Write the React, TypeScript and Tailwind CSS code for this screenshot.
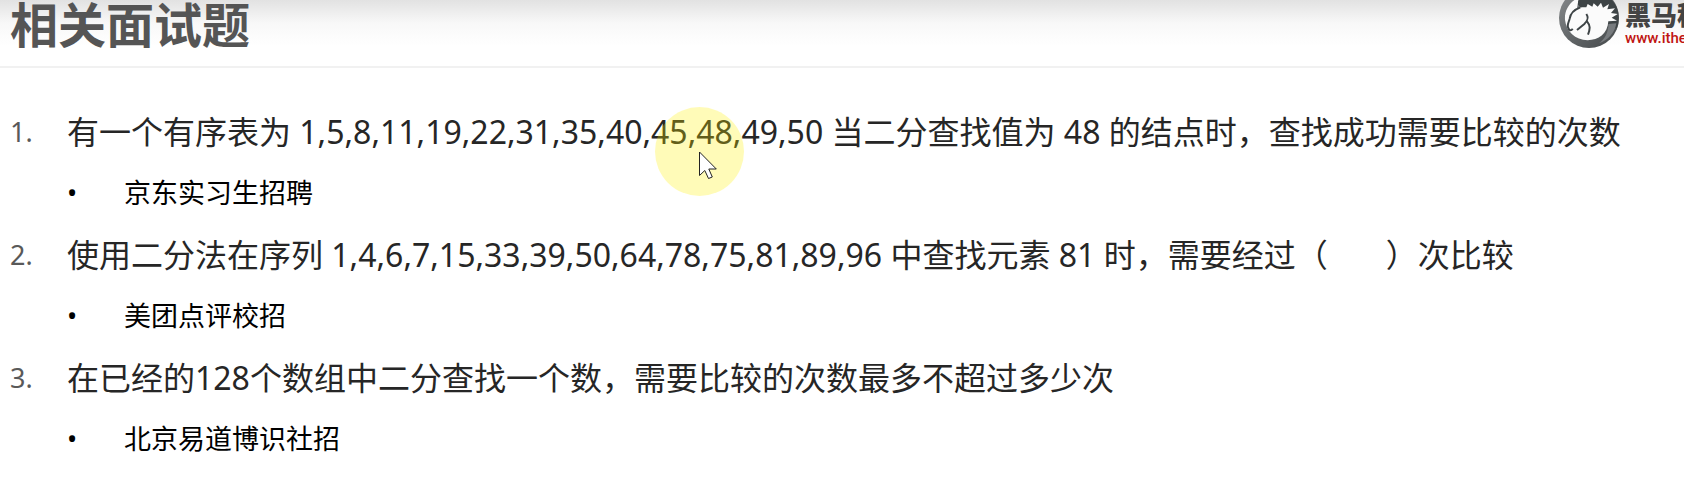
import type { ReactNode } from "react";

const questions: { text: ReactNode; source: string }[] = [
  {
    text: "有一个有序表为 1,5,8,11,19,22,31,35,40,45,48,49,50 当二分查找值为 48 的结点时，查找成功需要比较的次数",
    source: "京东实习生招聘",
  },
  {
    text: (
      <>
        使用二分法在序列 1,4,6,7,15,33,39,50,64,78,75,81,89,96 中查找元素 81 时，需要经过（
        <span className="inline-block w-[58px]" />
        ）次比较
      </>
    ),
    source: "美团点评校招",
  },
  {
    text: "在已经的128个数组中二分查找一个数，需要比较的次数最多不超过多少次",
    source: "北京易道博识社招",
  },
];

function HorseMark() {
  return (
    <svg viewBox="12 -36 180 180" className="size-[60px] shrink-0" aria-hidden="true">
      <defs>
        <linearGradient id="ring" x1="0" y1="0" x2="1" y2="1">
          <stop offset="0" stopColor="#8a8d8f" />
          <stop offset="0.6" stopColor="#5c6062" />
          <stop offset="1" stopColor="#44494b" />
        </linearGradient>
      </defs>
      <circle cx="102" cy="54" r="90" fill="url(#ring)" />
      <path d="M70 -20C100 -34 180 -26 190 40C192 60 190 72 186 84L160 84L80 24L62 8Z" fill="#3e4446" />
      <path
        d="M72 -8C42 6 28 32 30 60C34 94 60 120 98 121C130 120 158 102 160 64L186 62L170 53L188 42L168 39L180 25L157 28L162 12L144 23L138 8L128 20L116 10L112 20L98 12L94 22L80 22L66 24Z"
        fill="#fbfbfb"
      />
      <path d="M160 72L184 70C180 98 158 122 132 130C150 116 160 98 160 72Z" fill="#777b7e" />
      <path
        d="M80 20C68 12 72 4 76 0M76 22C54 30 46 42 44 56C42 66 36 72 39 82C42 92 48 94 53 86M94 42C102 54 98 62 88 72L66 90M96 64C106 76 106 86 99 104"
        fill="none"
        stroke="#3e4446"
        strokeWidth="6"
      />
    </svg>
  );
}

export default function App() {
  return (
    <div className="relative min-h-screen overflow-hidden bg-white font-['Noto_Sans','Noto_Sans_CJK_SC',sans-serif]">
      <header className="flex h-[68px] items-start justify-between overflow-hidden border-b-2 border-[#f1f1f1] bg-linear-to-b from-[#e2e2e2] via-[#f8f8f8] via-35% to-white to-70% pl-[10px]">
        <h1 className="text-[48px] leading-[50px] font-bold text-[#555555]">相关面试题</h1>
        <div className="-mt-3 flex w-[125px] shrink-0 gap-[6px]">
          <HorseMark />
          <div className="mt-3 whitespace-nowrap">
            <p className="text-[26px] leading-[30px] font-black text-[#444444]">黑马程序员</p>
            <a href="http://www.itheima.com" className="block font-['Roboto',sans-serif] text-[15px] leading-4 font-medium text-[#c01512]">
              www.itheima.com
            </a>
          </div>
        </div>
      </header>

      <main className="px-[10px] pt-[36px]">
        <ol className="flex flex-col">
          {questions.map((q, i) => (
            <li key={q.source} className="flex h-[123px] items-start">
              <span className="w-[57px] shrink-0 text-[27px] leading-[56px] text-[#595959]">{i + 1}.</span>
              <div className="whitespace-nowrap">
                <p className="text-[32px] leading-[56px] text-[#262626]">{q.text}</p>
                <ul className="text-[27px] leading-[66px] text-black">
                  <li className="flex items-center">
                    <span className="w-[57px] shrink-0">•</span>
                    {q.source}
                  </li>
                </ul>
              </div>
            </li>
          ))}
        </ol>
      </main>

      <div className="pointer-events-none absolute top-[107px] left-[655px] size-[89px] rounded-full bg-[#fff000]/28">
        <svg viewBox="0 0 18 28" className="absolute top-[44px] left-[44px] h-7 w-[18px]" aria-hidden="true">
          <path d="M0.5 1V24.5L5.8 19.5L9.5 27.5L13.3 26L9.8 18H17.3Z" fill="#fff" stroke="#222" />
        </svg>
      </div>
    </div>
  );
}
